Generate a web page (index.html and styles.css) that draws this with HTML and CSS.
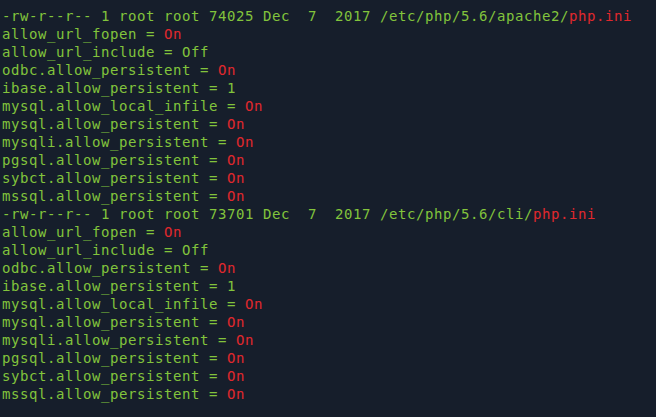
FILE: index.html
```html
<!DOCTYPE html>
<html>
<head>
<meta charset="utf-8">
<link rel="stylesheet" href="styles.css">
</head>
<body>
<div class="term">
<div class="line">-rw-r--r-- 1 root root 74025 Dec  7  2017 /etc/php/5.6/apache2/<span class="red">php.ini</span></div>
<div class="line">allow_url_fopen = <span class="red">On</span></div>
<div class="line">allow_url_include = Off</div>
<div class="line">odbc.allow_persistent = <span class="red">On</span></div>
<div class="line">ibase.allow_persistent = 1</div>
<div class="line">mysql.allow_local_infile = <span class="red">On</span></div>
<div class="line">mysql.allow_persistent = <span class="red">On</span></div>
<div class="line">mysqli.allow_persistent = <span class="red">On</span></div>
<div class="line">pgsql.allow_persistent = <span class="red">On</span></div>
<div class="line">sybct.allow_persistent = <span class="red">On</span></div>
<div class="line">mssql.allow_persistent = <span class="red">On</span></div>
<div class="line">-rw-r--r-- 1 root root 73701 Dec  7  2017 /etc/php/5.6/cli/<span class="red">php.ini</span></div>
<div class="line">allow_url_fopen = <span class="red">On</span></div>
<div class="line">allow_url_include = Off</div>
<div class="line">odbc.allow_persistent = <span class="red">On</span></div>
<div class="line">ibase.allow_persistent = 1</div>
<div class="line">mysql.allow_local_infile = <span class="red">On</span></div>
<div class="line">mysql.allow_persistent = <span class="red">On</span></div>
<div class="line">mysqli.allow_persistent = <span class="red">On</span></div>
<div class="line">pgsql.allow_persistent = <span class="red">On</span></div>
<div class="line">sybct.allow_persistent = <span class="red">On</span></div>
<div class="line">mssql.allow_persistent = <span class="red">On</span></div>
</div>
</body>
</html>
```
FILE: styles.css
```css
html, body {
  margin: 0;
  padding: 0;
  background: #161e2b;
  height: 100%;
  overflow: hidden;
}
.term {
  padding: 7px 0 0 2px;
  font-family: "DejaVu Sans Mono", "Liberation Mono", monospace;
  font-size: 14px;
  letter-spacing: 0.57px;
  line-height: 18px;
  color: #82c43c;
}
.line {
  white-space: pre;
  height: 18px;
}
.red {
  color: #e0282d;
}
```
